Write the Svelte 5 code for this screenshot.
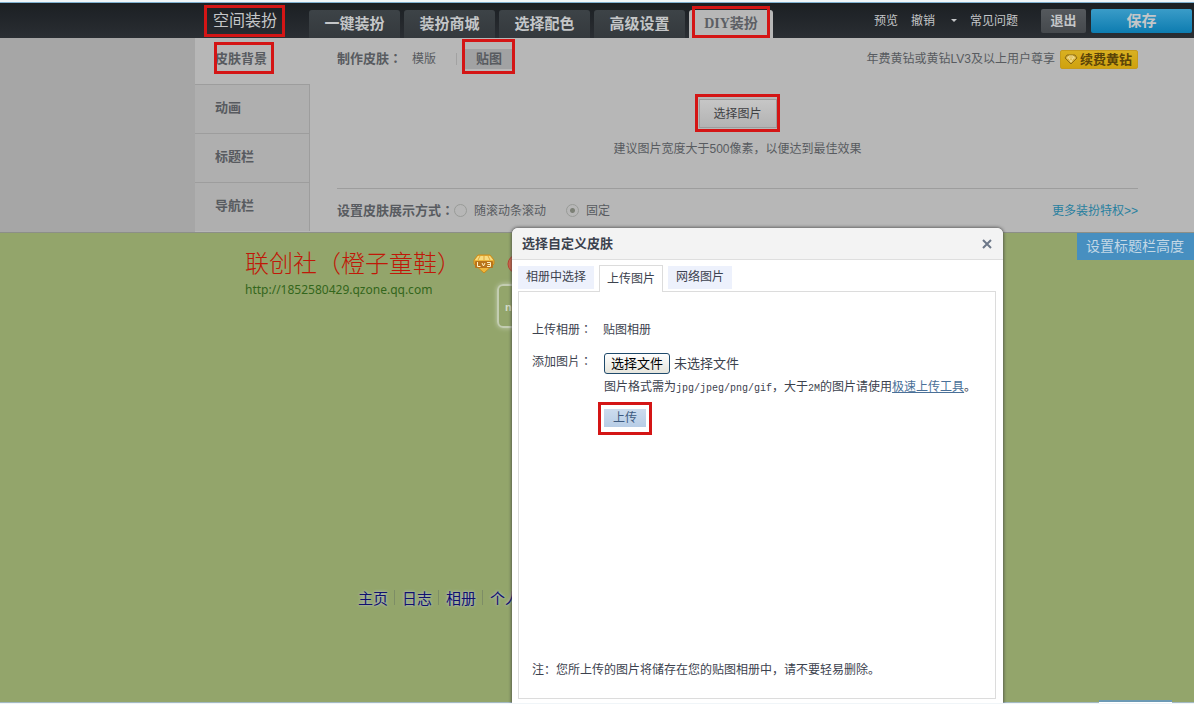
<script>
	let tabs = ["一键装扮", "装扮商城", "选择配色", "高级设置", "DIY装扮"];
	let activeTab = "DIY装扮";

	let sideItems = ["皮肤背景", "动画", "标题栏", "导航栏"];
	let activeSide = "皮肤背景";

	let dialogTabs = ["相册中选择", "上传图片", "网络图片"];
	let activeDialogTab = "上传图片";

	let navItems = ["主页", "日志", "相册", "个人档"];

	let display = "fixed";
	let dialogOpen = true;
	let fileName = "";

	function handleFile(event) {
		const file = event.target.files[0];
		fileName = file ? file.name : "";
	}
</script>

<div class="page">
	<header>
		<h1 class="marked">空间装扮</h1>
		<nav class="tabs">
			{#each tabs as tab}
				<button
					class="tab"
					class:active={tab === activeTab}
					class:marked={tab === activeTab}
					on:click={() => (activeTab = tab)}>{tab}</button>
			{/each}
		</nav>
		<div class="tools">
			<a href="#preview">预览</a>
			<a href="#undo" class="undo">撤销<span class="caret"></span></a>
			<a href="#faq">常见问题</a>
			<button class="exit">退出</button>
			<button class="save">保存</button>
		</div>
	</header>

	<section class="panel">
		<ul class="side">
			{#each sideItems as item}
				<li class:active={item === activeSide}>
					<button class:marked={item === activeSide} on:click={() => (activeSide = item)}>{item}</button>
				</li>
			{/each}
		</ul>

		<div class="settings">
			<div class="make">
				<strong>制作皮肤：</strong>
				<button class="kind">模版</button>
				<span class="bar"></span>
				<button class="kind current marked">贴图</button>
				<span class="vip">年费黄钻或黄钻LV3及以上用户尊享</span>
				<button class="renew">
					<svg width="14" height="11" viewBox="0 0 14 11">
						<path d="M3 1h8l2 3-6 6-6-6z" fill="#d9b23a" stroke="#8a6a16" />
						<path d="M3 4h8M5 4l2 4 2-4M4 4l1-2h4l1 2" fill="none" stroke="#f3e09a" />
					</svg>
					续费黄钻
				</button>
			</div>

			<div class="choose">
				<button class="pick marked" on:click={() => (dialogOpen = true)}>选择图片</button>
				<p>建议图片宽度大于500像素，以便达到最佳效果</p>
			</div>

			<div class="mode">
				<strong>设置皮肤展示方式：</strong>
				<label><input type="radio" name="display" value="scroll" bind:group={display} />随滚动条滚动</label>
				<label><input type="radio" name="display" value="fixed" bind:group={display} />固定</label>
				<a href="#more">更多装扮特权&gt;&gt;</a>
			</div>
		</div>
	</section>

	<main>
		<div class="space">
			<div class="space_title">
				<h2>联创社（橙子童鞋）</h2>
				<svg width="22" height="20" viewBox="0 0 22 20">
					<path d="M5 1h12l4 5v4L11 19 1 10V6z" fill="#eeb63a" stroke="#c98a1c" />
					<path d="M5 2h12l3 4H2z" fill="#f8dc80" />
					<path d="M7 2L5 6M11 2v4M15 2l2 4" stroke="#dda53a" />
					<rect x="2" y="7" width="18" height="7" rx="1" fill="#b9741a" />
					<path d="M4.500 8v4.500h3M9 9l1.500 3L12 9M14 8.500h3.500v4H14M14.500 10.500h3" fill="none" stroke="#fff3c4" />
				</svg>
				<svg width="20" height="20" viewBox="0 0 20 20">
					<circle cx="10" cy="10" r="9" fill="#cf6a4f" stroke="#b84334" />
					<path d="M10 3v14" stroke="#f0b9a0" />
				</svg>
			</div>
			<a class="url" href="#space">http://1852580429.qzone.qq.com</a>
			<div class="badge">no</div>
		</div>

		<button class="height_btn">设置标题栏高度</button>

		<nav class="space_nav">
			{#each navItems as item}
				<a href="#{item}">{item}</a>
			{/each}
		</nav>
		<div class="corner"></div>
	</main>

	{#if dialogOpen}
		<div class="dialog" role="dialog" aria-label="选择自定义皮肤">
			<div class="dialog_head">
				<h3>选择自定义皮肤</h3>
				<button aria-label="关闭" on:click={() => (dialogOpen = false)}>
					<svg width="10" height="10" viewBox="0 0 10 10">
						<path d="M1 1l8 8M9 1L1 9" stroke="#6c7788" stroke-width="2" />
					</svg>
				</button>
			</div>

			<div class="dialog_tabs">
				{#each dialogTabs as tab}
					<button class:active={tab === activeDialogTab} on:click={() => (activeDialogTab = tab)}>{tab}</button>
				{/each}
			</div>

			<form class="upload" on:submit|preventDefault>
				<span class="name">上传相册：</span>
				<span>贴图相册</span>

				<label class="name" for="picture">添加图片：</label>
				<div class="file">
					<input type="file" id="picture" accept="image/*" on:change={handleFile} />
					<label class="file_btn" for="picture">选择文件</label>
					<span>{fileName || "未选择文件"}</span>
				</div>

				<p class="tip">图片格式需为<span class="mono">jpg/jpeg/png/gif</span>，大于<span class="mono">2M</span>的图片请使用<a href="#tool">极速上传工具</a>。</p>

				<button type="submit" class="submit marked">上传</button>

				<p class="note">注：您所上传的图片将储存在您的贴图相册中，请不要轻易删除。</p>
			</form>
		</div>
	{/if}
</div>

<style>
	:global(body) {
		margin: 0;
	}

	.page {
		position: relative;
		box-sizing: border-box;
		min-height: 100vh;
		display: flex;
		flex-direction: column;
		border-top: 2px solid #f0f5f8;
		border-bottom: 1px solid #f0f5f8;
		background: #93a56b;
		color: #3c424e;
		font-family: "Liberation Sans", "Noto Sans CJK SC", sans-serif;
		font-size: 12px;
		line-height: 18px;
		overflow: hidden;
	}

	h1, h2, h3, p, ul {
		margin: 0;
		padding: 0;
		font-weight: normal;
	}

	button {
		border: none;
		padding: 0;
		background: none;
		color: inherit;
		font: inherit;
		white-space: nowrap;
		cursor: pointer;
	}

	a {
		color: inherit;
		text-decoration: none;
	}

	svg {
		display: block;
		flex: none;
	}

	/* the colon sits in the middle of its cell in the TC face */
	strong,
	.name {
		font-family: "Liberation Sans", "Noto Sans CJK TC", sans-serif;
	}

	/* red frame round the steps of the guide */
	.marked {
		position: relative;
	}

	.marked::after {
		content: "";
		position: absolute;
		inset: -4px;
		border: 3px solid #d41515;
		pointer-events: none;
	}

	/* header */
	header {
		display: flex;
		align-items: flex-end;
		height: 35px;
		padding-left: 208px;
		border-top: 1px solid #7fb0d0;
		background: linear-gradient(#1b1f23, #2a2e33);
		color: #c4c6c8;
	}

	h1 {
		padding: 0 4px 0 5px;
		margin-bottom: 5px;
		font-size: 16px;
		line-height: 24px;
	}

	.tabs {
		display: flex;
		gap: 4px;
		margin-left: 28px;
	}

	.tab {
		width: 91px;
		height: 28px;
		border-radius: 3px 3px 0 0;
		background: linear-gradient(#3d4347, #34393d);
		font-size: 15px;
		font-weight: bold;
	}

	.tab.active {
		width: 84px;
		background: #b7b7b7;
		color: #5c5f64;
		font-family: "Liberation Serif", "Noto Sans CJK SC", serif;
		font-size: 14px;
	}

	.tab.marked::after {
		inset: -4px 3px 0;
	}

	.tools {
		display: flex;
		align-items: center;
		align-self: center;
		gap: 13px;
		margin-left: auto;
		padding-right: 2px;
	}

	.undo {
		display: flex;
		align-items: center;
		gap: 16px;
	}

	.caret {
		border: 3px solid transparent;
		border-top-color: #c4c6c8;
		border-bottom: none;
	}

	.exit,
	.save {
		height: 24px;
		border-radius: 2px;
		font-weight: bold;
	}

	.exit {
		width: 45px;
		margin-left: 10px;
		background: linear-gradient(#55595d, #45494d);
		font-size: 13px;
	}

	.save {
		width: 101px;
		margin-left: -8px;
		background: linear-gradient(#3a9cc8, #0d7cb0);
		font-size: 15px;
	}

	/* settings panel */
	.panel {
		display: flex;
		padding-left: 195px;
		border-bottom: 1px solid #8c8f88;
		background: linear-gradient(to right, #a6a6a6 195px, #b7b7b7 195px);
		color: #585b60;
	}

	.side {
		width: 115px;
		list-style: none;
	}

	.side li {
		box-sizing: border-box;
		height: 49px;
		padding: 14px 20px;
		border-top: 1px solid #9d9d9d;
		border-right: 1px solid #9d9d9d;
		background: #afafaf;
	}

	.side li.active {
		height: 46px;
		padding: 11px 20px;
		border-color: transparent;
		background: none;
	}

	.side button,
	.panel strong {
		font-size: 13px;
		font-weight: bold;
	}

	.side .marked::after {
		inset: -8px -7px -6px -1px;
	}

	.settings {
		flex: 1;
		margin: 0 56px 0 27px;
	}

	.make {
		display: flex;
		align-items: center;
		height: 42px;
	}

	.kind {
		padding: 0 12px;
		line-height: 20px;
	}

	.make .kind:first-of-type {
		padding-left: 10px;
		padding-right: 20px;
	}

	.bar {
		height: 12px;
		margin-right: 8px;
		border-left: 1px solid #a2a2a2;
	}

	.current {
		padding: 0 11px;
		background: #a1a2a3;
		font-size: 13px;
		font-weight: bold;
	}

	.current.marked::after {
		inset: -10px -2px -5px -3px;
	}

	.vip {
		margin: 0 5px 0 auto;
	}

	.renew {
		display: flex;
		align-items: center;
		gap: 2px;
		padding: 0 5px 0 3px;
		border: 1px solid #c69b1b;
		border-radius: 2px;
		background: linear-gradient(#d9b021, #cfa20f);
		color: #5a4308;
		font-size: 13px;
		font-weight: bold;
		line-height: 17px;
	}

	.choose {
		display: flex;
		flex-direction: column;
		align-items: center;
		gap: 12px;
		box-sizing: border-box;
		height: 108px;
		padding-top: 19px;
	}

	.pick {
		width: 78px;
		height: 29px;
		border: 1px solid #9c9c9c;
		background: linear-gradient(#c6c6c6, #b3b3b3);
		color: #3f4144;
	}

	.pick.marked::after {
		inset: -6px -4px -5px -5px;
	}

	.mode {
		display: flex;
		align-items: center;
		height: 43px;
		border-top: 1px solid #9d9d9d;
	}

	.mode label {
		display: flex;
		align-items: center;
		gap: 7px;
		margin-right: 20px;
	}

	.mode input {
		appearance: none;
		box-sizing: border-box;
		width: 13px;
		height: 13px;
		margin: 0;
		border: 1px solid #999b98;
		border-radius: 50%;
	}

	.mode input:checked {
		background: radial-gradient(circle, #7c8076 0 2px, transparent 3px);
	}

	.mode a {
		margin-left: auto;
		color: #287f9f;
	}

	/* the space itself */
	main {
		flex: 1;
		position: relative;
		display: flex;
		flex-direction: column;
		border-bottom: 1px solid #a3b9c2;
	}

	.space {
		display: flex;
		flex-direction: column;
		padding: 16px 0 0 245px;
	}

	.space_title {
		display: flex;
		align-items: center;
		gap: 12px;
		color: #c01808;
	}

	h2 {
		font-size: 24px;
		font-weight: 300;
		line-height: 30px;
	}

	.url {
		margin-top: 2px;
		color: #33661c;
		font-family: "Noto Sans", sans-serif;
	}

	.badge {
		width: 60px;
		height: 40px;
		margin: -15px 0 0 252px;
		padding-left: 6px;
		border: 2px solid #c3cdb1;
		border-radius: 6px;
		box-shadow: 0 0 5px #c3cdb1;
		color: #d5dcc8;
		font-size: 11px;
		font-weight: bold;
		line-height: 42px;
	}

	.height_btn {
		position: absolute;
		top: 0;
		right: 0;
		padding: 0 10px 0 9px;
		background: #478fc0;
		color: #c3d8e6;
		font-size: 14px;
		line-height: 27px;
	}

	.space_nav {
		display: flex;
		margin: auto 0 94px 358px;
		color: #10106e;
		font-size: 15px;
		text-shadow: 0 0 3px #c5cdf0;
	}

	.space_nav a + a {
		margin-left: 6px;
		padding-left: 8px;
		background: linear-gradient(#7d8d66, #7d8d66) left top / 1px 15px no-repeat;
	}

	.corner {
		position: absolute;
		right: 22px;
		bottom: -1px;
		width: 73px;
		height: 1px;
		border-top: 2px solid #6d9ab5;
		background: #ffffff;
	}

	/* dialog */
	.dialog {
		position: absolute;
		top: 226px;
		bottom: 0;
		left: 512px;
		width: 491px;
		display: flex;
		flex-direction: column;
		border-radius: 6px 6px 0 0;
		background: #ffffff;
		box-shadow: 0 0 3px 1px rgba(60, 60, 60, 0.65);
	}

	.dialog_head {
		display: flex;
		align-items: center;
		justify-content: space-between;
		height: 31px;
		padding: 0 11px 0 10px;
		border-bottom: 1px solid #dedede;
		border-radius: 6px 6px 0 0;
		background: #f3f3f3;
	}

	h3 {
		font-size: 13px;
		font-weight: bold;
	}

	.dialog_tabs {
		display: flex;
		align-items: flex-start;
		gap: 5px;
		padding: 5px 6px 0;
	}

	.dialog_tabs button {
		padding: 0 8px;
		margin-top: 1px;
		background: #edf1fc;
		line-height: 23px;
	}

	.dialog_tabs .active {
		position: relative;
		margin: 0 0 -1px;
		padding: 0 7px;
		border: 1px solid #dcdcdc;
		border-bottom: none;
		background: #ffffff;
		line-height: 26px;
	}

	.upload {
		flex: 1;
		display: grid;
		grid-template-columns: 71px 1fr;
		grid-template-rows: auto auto auto auto 1fr;
		align-items: center;
		margin: 0 7px 4px 6px;
		padding: 29px 14px 19px 13px;
		border: 1px solid #dcdcdc;
	}

	.file {
		display: flex;
		align-items: center;
		gap: 4px;
		margin-top: 14px;
		font-size: 13px;
	}

	.upload > label {
		margin-top: 11px;
	}

	.file input {
		position: absolute;
		width: 1px;
		height: 1px;
		opacity: 0;
	}

	.file_btn {
		padding: 0 6px;
		margin-left: 1px;
		border: 1px solid #1f4a6b;
		border-radius: 3px;
		background: linear-gradient(#ffffff, #e6e5dc);
		color: #000000;
		line-height: 19px;
	}

	.tip {
		grid-column: 2;
		margin: 4px 0 0 1px;
		white-space: nowrap;
	}

	.mono {
		font-family: "Liberation Mono", monospace;
		font-size: 10px;
	}

	.tip a {
		color: #4a7098;
		text-decoration: underline;
	}

	.submit {
		grid-column: 2;
		justify-self: start;
		margin: 11px 0 0 1px;
		padding: 0 9px;
		background: linear-gradient(#cddcee, #b7cde6);
		color: #3d5a80;
	}

	.submit.marked::after {
		inset: -7px -6px -8px;
	}

	.note {
		grid-column: 1 / 3;
		align-self: end;
	}
</style>
